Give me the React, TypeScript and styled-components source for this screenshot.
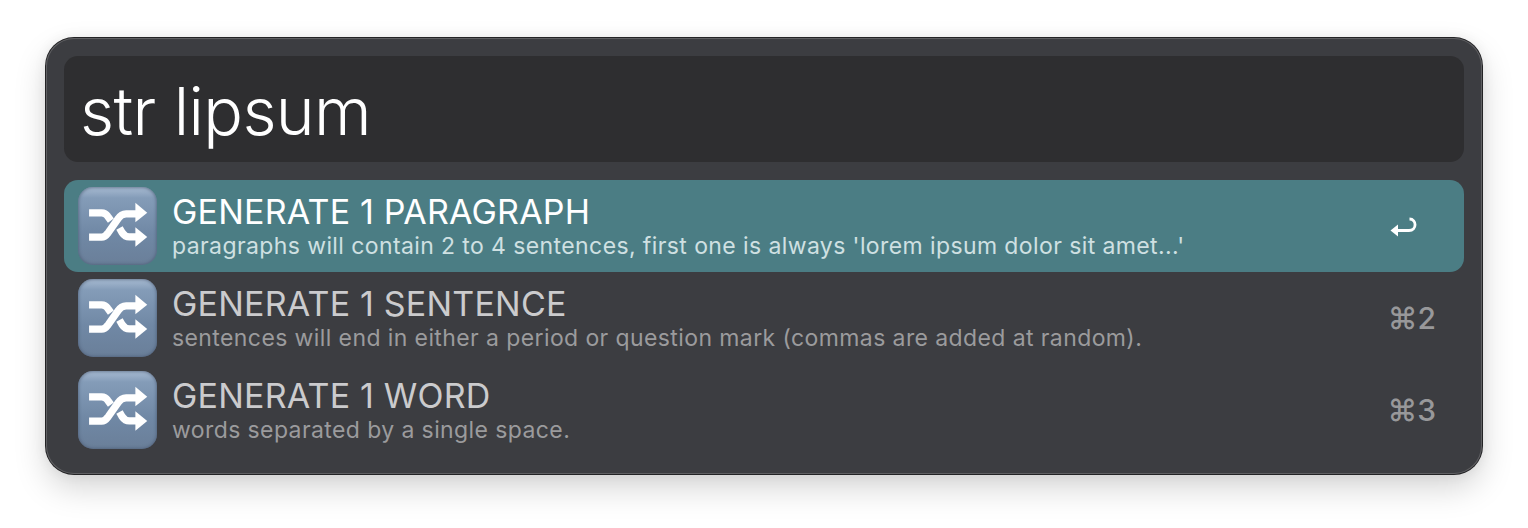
import React from "react";
import styled, { createGlobalStyle } from "styled-components";

const GlobalStyle = createGlobalStyle`
  html, body {
    margin: 0;
    background: #fff;
  }
  body {
    font-family: Inter, "Liberation Sans", sans-serif;
  }
`;

type Result = {
  title: string;
  subtitle: string;
  shortcut?: string;
};

const results: Result[] = [
  {
    title: "GENERATE 1 PARAGRAPH",
    subtitle:
      "paragraphs will contain 2 to 4 sentences, first one is always 'lorem ipsum dolor sit amet...'",
  },
  {
    title: "GENERATE 1 SENTENCE",
    subtitle:
      "sentences will end in either a period or question mark (commas are added at random).",
    shortcut: "⌘2",
  },
  {
    title: "GENERATE 1 WORD",
    subtitle: "words separated by a single space.",
    shortcut: "⌘3",
  },
];

const ShuffleIcon = () => (
  <svg viewBox="25 24 238 236" width="79" height="78">
    <g fill="none" stroke="#fff" strokeWidth="22" strokeLinejoin="round">
      <path d="M58 176 H96 C106 176 110 170 116 162 L146 120 C152 110 158 105 170 105 H204" />
      <path d="M58 102 H96 C104 102 110 106 114 112 L124 126" />
      <path d="M150 148 L158 162 C164 171 170 175 180 175 H204" />
    </g>
    <path d="M198 72 L234 102 L198 131 Z" fill="#fff" />
    <path d="M198 146 L234 175 L198 205 Z" fill="#fff" />
  </svg>
);

const ReturnIcon = () => (
  <svg viewBox="0 0 28 22" width="28" height="22">
    <path
      d="M6 15.5 H19 C27 15.5 27 4 19.5 4"
      fill="none"
      stroke="#fff"
      strokeWidth="2.8"
    />
    <path d="M0.5 15.5 L8 9.5 V21.5 Z" fill="#fff" />
  </svg>
);

const App = () => {
  return (
    <Page>
      <GlobalStyle />
      <Panel>
        <SearchBox>str lipsum</SearchBox>
        <List>
          {results.map((result, i) => (
            <Row key={result.title} $selected={i === 0}>
              <IconTile>
                <ShuffleIcon />
              </IconTile>
              <RowText>
                <Title $selected={i === 0}>{result.title}</Title>
                <Subtitle $selected={i === 0}>{result.subtitle}</Subtitle>
              </RowText>
              {result.shortcut ? (
                <Shortcut>{result.shortcut}</Shortcut>
              ) : (
                <ReturnHint>
                  <ReturnIcon />
                </ReturnHint>
              )}
            </Row>
          ))}
        </List>
      </Panel>
    </Page>
  );
};

const Page = styled.div`
  box-sizing: border-box;
  width: 1528px;
  height: 528px;
  padding: 38px 46px;
  overflow: hidden;
`;

const Panel = styled.div`
  box-sizing: border-box;
  width: 1436px;
  height: 436px;
  padding: 18px;
  display: flex;
  flex-direction: column;
  gap: 18px;
  border-radius: 28px;
  background: #3c3d41;
  box-shadow:
    inset 0 0 0 1px #5f5f62,
    0 0 0 1px #232325,
    0 14px 32px rgba(0, 0, 0, 0.17),
    0 0 14px rgba(0, 0, 0, 0.07);
`;

const SearchBox = styled.div`
  box-sizing: border-box;
  height: 106px;
  padding: 4px 0 0 16px;
  display: flex;
  align-items: center;
  border-radius: 14px;
  background: #2e2e30;
  color: #fff;
  font-size: 66px;
  font-weight: 300;
  letter-spacing: -0.6px;
`;

const List = styled.div`
  display: flex;
  flex-direction: column;
`;

const Row = styled.div<{ $selected: boolean }>`
  height: 92px;
  padding-left: 14px;
  display: flex;
  align-items: center;
  border-radius: 14px;
  background: ${(p) => (p.$selected ? "#4b7d84" : "transparent")};
`;

const IconTile = styled.div`
  width: 79px;
  height: 78px;
  flex-shrink: 0;
  border-radius: 15px;
  background: linear-gradient(#a8bbd2 0%, #849cb8 14%, #7088a5 60%, #6a7f99 100%);
  box-shadow: inset 0 0 3px 1px rgba(70, 85, 110, 0.6);
`;

const RowText = styled.div`
  flex: 1;
  margin-left: 15px;
  padding-top: 4px;
  display: flex;
  flex-direction: column;
`;

const Title = styled.div<{ $selected: boolean }>`
  margin-top: -4px;
  color: ${(p) => (p.$selected ? "#fff" : "#cbcbcd")};
  font-size: 34px;
  line-height: 40px;
  letter-spacing: 0.2px;
`;

const Subtitle = styled.div<{ $selected: boolean }>`
  margin-top: 1px;
  color: ${(p) => (p.$selected ? "#cfe0e2" : "#9b9b9d")};
  font-size: 23px;
  line-height: 27px;
  letter-spacing: 0.4px;
`;

const Shortcut = styled.div`
  width: 75px;
  flex-shrink: 0;
  padding-right: 28px;
  color: #98989a;
  font-size: 30px;
  font-weight: 500;
  text-align: right;
`;

const ReturnHint = styled.div`
  width: 74px;
  flex-shrink: 0;
  display: flex;
`;

export default App;
